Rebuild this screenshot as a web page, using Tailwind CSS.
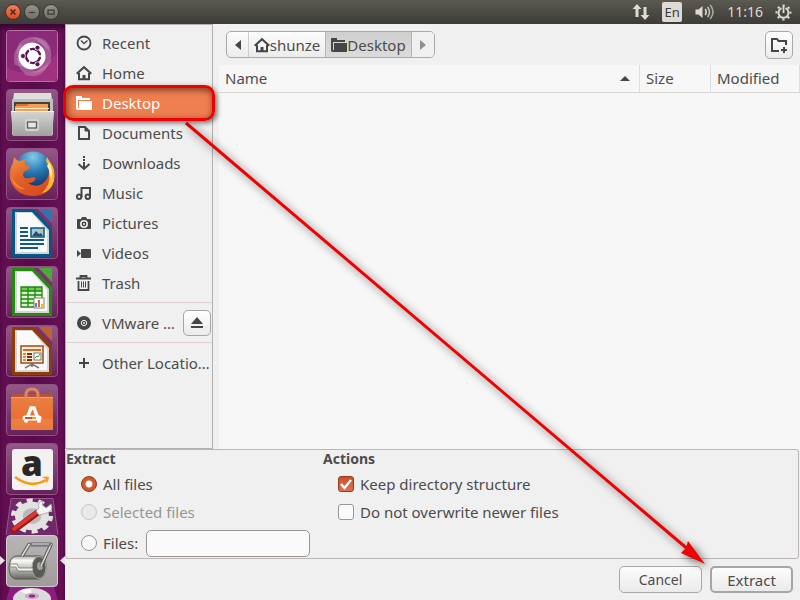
<!DOCTYPE html>
<html lang="en">
<head>
    <meta charset="UTF-8">
    <meta name="viewport" content="width=device-width, initial-scale=1.0">
    <title>Extract</title>
    <script src="https://cdn.jsdelivr.net/npm/@tailwindcss/browser@4"></script>
</head>
<body class="flex h-screen flex-col overflow-hidden bg-[#f0f0f0] font-['Noto_Sans',sans-serif] text-[15px] leading-5 text-[#4c4c4c]">

    <!-- Top panel -->
    <header class="flex h-6 shrink-0 items-center justify-between bg-linear-to-b from-[#5b5950] to-[#3c3b37] text-[#dfdbd2]">
        <div class="flex items-center gap-[3px] pl-[5px]">
            <button aria-label="Close" class="size-4 rounded-full border border-[#3a332e] bg-linear-to-b from-[#f47e57] to-[#dc4a1c]">
                <svg viewBox="0 0 14 14" class="size-full" stroke="#4a2415" stroke-width="1.5"><path d="M4.5 4.5l5 5M9.5 4.5l-5 5"/></svg>
            </button>
            <button aria-label="Minimize" class="size-4 rounded-full border border-[#3a3934] bg-linear-to-b from-[#96948a] to-[#716f66]">
                <svg viewBox="0 0 14 14" class="size-full" stroke="#3c3b37" stroke-width="1.3"><path d="M4 7.5h6"/></svg>
            </button>
            <button aria-label="Maximize" class="size-4 rounded-full border border-[#3a3934] bg-linear-to-b from-[#96948a] to-[#716f66]">
                <svg viewBox="0 0 14 14" class="size-full" fill="none" stroke="#3c3b37" stroke-width="1.3"><path d="M4 5.2h6v4H4z"/></svg>
            </button>
        </div>
        <div class="flex items-center gap-3 pr-2 text-[14px]">
            <svg width="18" height="18" viewBox="0 0 18 18" fill="#dfdbd2"><path d="M5 1l4.500 5H6.500v8h-3V6H.5zM13 17l-4.500-5h3V4h3v8h3z"/></svg>
            <span class="flex size-5 items-center justify-center rounded-xs bg-[#dfdbd2] text-[13px] text-[#3c3b37]">En</span>
            <svg width="21" height="18" viewBox="0 0 20 18" fill="none" stroke="#dfdbd2" stroke-width="1.6" stroke-linecap="round"><path d="M1 6.500h3L8 3v12l-4-3.500H1z" fill="#dfdbd2" stroke="none"/><path d="M11 6.500q1.500 2.500 0 5"/><path d="M13.500 4.500q3 4.500 0 9" stroke="#c5c1b8"/><path d="M16 2.500q5 6.500 0 13" stroke="#aaa79e"/></svg>
            <span>11:16</span>
            <svg width="17" height="17" viewBox="0 0 17 17" fill="none" stroke="#dfdbd2"><circle cx="8.500" cy="8.500" r="7" stroke-width="2" stroke-dasharray="2.200 3.298" stroke-dashoffset="1.100"/><path d="M6.500 4.200A5 5 0 1 0 10.500 4.200" stroke-width="1.900"/><path d="M8.500 2v7" stroke-width="1.800"/></svg>
        </div>
    </header>

    <div class="flex min-h-0 flex-1">

        <!-- Launcher -->
        <nav aria-label="Launcher" class="w-[65px] shrink-0 overflow-hidden bg-linear-to-r from-[#650e54] via-[#560b49] to-[#6a1058] shadow-[inset_0_4px_4px_#3a0630]">
            <div class="flex flex-col items-center gap-[7px] pt-[6px] pr-px">
                <button aria-label="Search" class="size-[52px] overflow-hidden rounded-sm border border-[#b472a4] bg-[#8e2b7c]">
                    <svg viewBox="0 0 50 50" class="size-full">
                        <rect width="50" height="50" fill="#8b2a79"/>
                        <path d="M0 36Q24 52 50 22V50H0z" fill="#a13280"/>
                        <g fill="#c9a0bf" fill-opacity=".4">
                            <path d="M10 25Q8 8 25 6Q42 8 42 20Q34 9 20 12Q12 16 10 25z"/>
                            <path d="M25 6Q47 5 44 31Q36 43 26 42Q40 34 38 20Q34 10 25 6z"/>
                            <path d="M42 32Q35 49 19 44Q8 35 11 24Q17 39 31 40z"/>
                            <path d="M8 34Q4 20 15 12Q12 24 17 36z"/>
                        </g>
                        <circle cx="25" cy="25" r="13.500" fill="#fff"/>
                        <circle cx="26" cy="25" r="7" fill="none" stroke="#5b1350" stroke-width="2.600"/>
                        <path d="M26 25L36 25M26 25L21 16.300M26 25L21 33.700" stroke="#fff" stroke-width="1.500"/>
                        <circle cx="26" cy="25" r="5.700" fill="#fff"/>
                        <g fill="#5b1350" stroke="#fff" stroke-width=".8"><circle cx="16" cy="25" r="2.500"/><circle cx="30.500" cy="16.700" r="2.500"/><circle cx="30.500" cy="33.300" r="2.500"/></g>
                    </svg>
                </button>
                <button aria-label="Files" class="size-[52px] overflow-hidden rounded-sm border border-[#8f5282] bg-linear-to-b from-[#925887] to-[#672159]">
                    <svg viewBox="0 0 50 50" class="size-full">
                        <defs><linearGradient id="cab" x2="0" y2="1"><stop stop-color="#d6d6d5"/><stop offset="1" stop-color="#a0a09e"/></linearGradient></defs>
                        <path d="M7 3h37l2 14H5z" fill="#dededc"/><path d="M5 9h41v36H5z" fill="#bfbfbd"/>
                        <path d="M7 12h36v12H7z" fill="#45413b"/><path d="M9 14h32v8H9z" fill="#d57332"/><path d="M8 16h12l2-2h19v9H8z" fill="#f1a055"/><path d="M8 18h34v1H8z" fill="#ffe3bd"/>
                        <path d="M4 21h43v2l-2 23H6L4 23z" fill="url(#cab)"/>
                        <path d="M4 21.500h43" stroke="#f6f6f5"/>
                        <rect x="18" y="29" width="14" height="12" rx="2" fill="#d3d3d1"/><rect x="20.500" y="32" width="9" height="6" fill="#e7e7e6" stroke="#5a5a59" stroke-width="1.300"/>
                    </svg>
                </button>
                <button aria-label="Firefox" class="size-[52px] overflow-hidden rounded-sm border border-[#8f5282] bg-linear-to-b from-[#925887] to-[#672159]">
                    <svg viewBox="0 0 50 50" class="size-full">
                        <defs><radialGradient id="globe" cx=".5" cy=".15" r=".8"><stop stop-color="#86cbe8"/><stop offset=".5" stop-color="#2b7db9"/><stop offset="1" stop-color="#173a70"/></radialGradient><linearGradient id="fox" x2=".6" y2="1"><stop stop-color="#f29745"/><stop offset=".5" stop-color="#e2602a"/><stop offset="1" stop-color="#d94a20"/></linearGradient></defs>
                        <circle cx="26" cy="20.500" r="18" fill="url(#globe)"/>
                        <path d="M42 12Q49 20 47 32Q43 46 27 47Q8 47 3 30Q2 20 6 14L7 8Q10 12 13 12Q16 10 20 10Q17 13 18 16L23 17Q23 20 18 22Q14 26 18 29Q21 30 26 28Q30 29 28 31Q26 34 21 34Q28 39 35 35Q42 30 42 22z" fill="url(#fox)"/>
                        <path d="M43 13Q49 20 47 32Q44 42 35 44Q44 36 42 24Q43 18 39 12L40 8z" fill="#f5b732"/><path d="M42 13Q47 21 44 33Q44 24 40 17z" fill="#fdee9a"/>
                        <path d="M4 26Q8 37 18 40Q11 41 6 34z" fill="#f3873c"/>
                    </svg>
                </button>
                <button aria-label="Writer" class="size-[52px] overflow-hidden rounded-sm border border-[#8f5282] bg-linear-to-b from-[#925887] to-[#672159]">
                    <svg viewBox="0 0 50 50" class="size-full">
                        <path d="M5 1h22l18 19v29H5z" fill="#075786"/><path d="M8 4h17l17 18v24H8z" fill="#d5d5d5"/><path d="M10 5h15l15 18v21H10z" fill="#fafafa"/>
                        <path d="M32 1h13v14z" fill="#3274ad"/><path d="M27 1h4l14 15v4z" fill="#7b2e6b"/>
                        <g stroke="#125985" stroke-width="2"><path d="M13 20h8M13 24h8M13 28h8M13 32h24M13 36h24M13 40h18"/></g>
                        <rect x="24" y="20" width="13" height="9" fill="#9ecae8" stroke="#0b5583" stroke-width="1.500"/><circle cx="34" cy="22.500" r="1.500" fill="#efbf33"/><path d="M25 28l4-5 3 3 2-1 2 3z" fill="#364c56"/>
                    </svg>
                </button>
                <button aria-label="Calc" class="size-[52px] overflow-hidden rounded-sm border border-[#8f5282] bg-linear-to-b from-[#925887] to-[#672159]">
                    <svg viewBox="0 0 50 50" class="size-full">
                        <path d="M5 1h22l18 19v29H5z" fill="#228b10"/><path d="M8 4h17l17 18v24H8z" fill="#d5d5d5"/><path d="M10 5h15l15 18v21H10z" fill="#fafafa"/>
                        <path d="M32 1h13v14z" fill="#45ae35"/><path d="M27 1h4l14 15v4z" fill="#7b2e6b"/>
                        <path d="M14 20h21v20H14z" fill="#d8f3cd"/><path d="M14 20h21v4H14z" fill="#69cf4e"/><path d="M14 20h21v20H14zM14 24h21M14 28h21M14 32h21M14 36h21M21 20v20M28 20v20" fill="none" stroke="#22850f" stroke-width="1.300"/>
                        <rect x="27" y="31" width="10" height="10" fill="#fff" stroke="#77808a"/><path d="M28 36h2v4h-2z" fill="#318fd4"/><path d="M31 33h2v7h-2z" fill="#df6331"/><path d="M34 37h2v3h-2z" fill="#efba20"/>
                    </svg>
                </button>
                <button aria-label="Impress" class="size-[52px] overflow-hidden rounded-sm border border-[#8f5282] bg-linear-to-b from-[#925887] to-[#672159]">
                    <svg viewBox="0 0 50 50" class="size-full">
                        <path d="M5 1h22l18 19v29H5z" fill="#8e3d0a"/><path d="M8 4h17l17 18v24H8z" fill="#d5d5d5"/><path d="M10 5h15l15 18v21H10z" fill="#fafafa"/>
                        <path d="M32 1h13v14z" fill="#bd6433"/><path d="M27 1h4l14 15v4z" fill="#7b2e6b"/>
                        <path d="M18 42l7-4 7 4M25 37v4" fill="none" stroke="#777" stroke-width="1.500"/>
                        <rect x="14" y="20" width="22" height="17" fill="#fff0df" stroke="#a14a14" stroke-width="1.500"/><path d="M16 24h18" stroke="#d9662a" stroke-width="2"/>
                        <path d="M16 28h3M16 31h3M16 34h3" stroke="#dd8b40" stroke-width="2"/><path d="M20 28h5M20 31h5M20 34h5" stroke="#7d2e0b" stroke-width="2"/><rect x="27" y="27" width="7" height="7" fill="#fff" stroke="#777"/><path d="M28 32l2-2 1 1 2-3" fill="none" stroke="#32a62c"/>
                    </svg>
                </button>
                <button aria-label="Ubuntu Software" class="size-[52px] overflow-hidden rounded-sm border border-[#8f5282] bg-linear-to-b from-[#925887] to-[#672159]">
                    <svg viewBox="0 0 50 50" class="size-full">
                        <defs><linearGradient id="bag" x2="0" y2="1"><stop stop-color="#ea7f44"/><stop offset=".65" stop-color="#e9702f"/><stop offset=".66" stop-color="#ec8144"/><stop offset="1" stop-color="#ea7a3d"/></linearGradient></defs>
                        <path d="M6 9h39l1 5H4z" fill="#b85234"/><path d="M4 12h42v33H4z" fill="url(#bag)"/><path d="M4 12.500h42" stroke="#f3a26a"/>
                        <path d="M19 16V10q0-6 6-6t6 6v6" fill="none" stroke="#df8560" stroke-width="3"/>
                        <path d="M18.500 37.500L24 23h3l5.500 14.500" fill="none" stroke="#fff" stroke-width="3.500"/>
                        <path d="M18 33h14" stroke="#fff" stroke-width="5" stroke-linecap="round"/>
                        <path d="M18 33h7" stroke="#d25823" stroke-width="2"/><path d="M25 33h4" stroke="#f1a51b" stroke-width="2"/>
                    </svg>
                </button>
                <button aria-label="Amazon" class="size-[52px] rounded-sm border border-[#8f5282] bg-linear-to-b from-[#925887] to-[#672159]">
                    <svg viewBox="0 0 50 50" class="size-full overflow-visible">
                        <rect x="5" y="5" width="41" height="41" rx="3" fill="#f3f2f3"/>
                        <text x="25" y="32" text-anchor="middle" font-family="Open Sans, sans-serif" font-weight="800" font-size="35" fill="#292824">a</text>
                        <path d="M8 33Q24 45 39 36" fill="none" stroke="#f79b17" stroke-width="2.600"/><path d="M35 33q4-1 7 0q0 4-3 7q1-3 0-5z" fill="#f79b17"/>
                    </svg>
                </button>
            </div>
            <!-- folded launcher items -->
            <div class="flex flex-col items-center pt-[3px] pr-px">
                <button aria-label="System Settings" class="h-[37px] w-[54px]">
                    <svg viewBox="0 0 54 37" class="size-full">
                        <path d="M6 .5h42l5 37H1z" fill="#70286a" stroke="#96568a"/>
                        <g transform="translate(27 18) scale(1 .84)" fill="none"><circle r="18.500" stroke="#e2e2e1" stroke-width="5" stroke-dasharray="6 5.624"/><circle r="13" stroke="#e2e2e1" stroke-width="8"/><circle r="9" fill="#bdb8bc" stroke="#c9c9c9"/></g>
                        <path d="M9 32L32 15" stroke="#a01616" stroke-width="6.500" stroke-linecap="round"/><path d="M9 31L32 14" stroke="#d63a32" stroke-width="3.500" stroke-linecap="round"/>
                        <path d="M31 13L34 10Q32 4 38 3L37 7L41 10L46 6Q49 12 42 15L34 17z" fill="#f4f4f3" stroke="#999" stroke-width=".7"/>
                    </svg>
                </button>
                <div class="relative flex w-[65px] justify-center">
                    <svg class="absolute top-[21px] left-0" width="5" height="9" viewBox="0 0 5 9" fill="#e9dfe7"><path d="M0 0l5 4.500L0 9z"/></svg>
                    <button aria-label="Archive Manager" class="size-[52px] overflow-hidden rounded-sm border border-[#d2ced0] bg-linear-to-b from-[#b9b5b7] to-[#a19a9e]">
                        <svg viewBox="0 0 50 50" class="size-full">
                            <defs><linearGradient id="drum" x2="0" y2="1"><stop stop-color="#a9a9a5"/><stop offset=".2" stop-color="#fbfbf9"/><stop offset=".5" stop-color="#c6c6c1"/><stop offset="1" stop-color="#686863"/></linearGradient></defs>
                            <path d="M9 20h24q6 1 6 11t-7 12H8Q2 41 2 31Q3 21 9 20z" fill="url(#drum)" stroke="#555550"/>
                            <ellipse cx="32" cy="31.500" rx="7" ry="11" fill="#5b5b56" stroke="#a7a7a2"/><ellipse cx="33" cy="30" rx="3" ry="4" fill="#a2a29d"/>
                            <path d="M3 28h7l2 4h14v3H11l-2-4H3z" fill="#f2f2ee" stroke="#686862" stroke-width=".7"/>
                            <path d="M15 20L22 8.500H44L34 30" fill="none" stroke="#5c5c59" stroke-width="3.500" stroke-linejoin="round"/><path d="M15 20L22 8.500H44L34 30" fill="none" stroke="#d9d9d5" stroke-width="1.600" stroke-linejoin="round"/><path d="M25 8.500h17" stroke="#77777a" stroke-width="4" stroke-linecap="round"/><path d="M25 8h17" stroke="#bcbcba" stroke-width="1.500"/>
                        </svg>
                    </button>
                    <svg class="absolute top-[21px] right-0" width="5" height="9" viewBox="0 0 5 9" fill="#e9dfe7"><path d="M5 0L0 4.500 5 9z"/></svg>
                </div>
                <button aria-label="Disc" class="h-[14px] w-[54px]">
                    <svg viewBox="0 0 54 14" class="size-full">
                        <path d="M5 0h44l4 14H1z" fill="#8e1c7e"/><ellipse cx="27" cy="12" rx="19" ry="11" fill="#dddadd"/><path d="M27 9L14 4q6-3 12-2z" fill="#f8fae9"/><ellipse cx="27" cy="9" rx="7" ry="3" fill="#c9a2c6"/><ellipse cx="27" cy="9" rx="3" ry="1.500" fill="#8d267c"/>
                    </svg>
                </button>
            </div>
        </nav>

        <!-- Extract dialog -->
        <main class="relative flex min-w-0 flex-1 flex-col">
            <div class="flex min-h-0 flex-1">

                <!-- Places -->
                <aside class="w-[148px] shrink-0 border border-[#b5b0ae] pt-[3px]">
                    <ul>
                        <li><a href="#" class="flex h-[30px] items-center gap-[10px] pl-[10px]">
                            <svg width="16" height="16" viewBox="0 0 16 16" fill="none" stroke="#464646"><circle cx="8" cy="8" r="6.500" stroke-width="1.800"/><path d="M5 5.500l3 3 3.500-3" stroke-width="1.300"/></svg>Recent</a></li>
                        <li><a href="#" class="flex h-[30px] items-center gap-[10px] pl-[10px]">
                            <svg width="16" height="16" viewBox="0 0 16 16" fill="none" stroke="#464646" stroke-width="2"><path d="M.7 8.700L8 2.200l7.300 6.500M3 8v6.200h10V8"/><path d="M6.500 10h3v4h-3z" fill="#464646" stroke="none"/></svg>Home</a></li>
                        <li class="relative"><a href="#" class="flex h-[30px] items-center gap-[10px] bg-[#f07f50] pl-[10px] text-white">
                            <svg width="16" height="16" viewBox="0 0 16 16" fill="#fff"><path d="M0 1h6v2h8v2H2v8l-2 2z"/><path d="M3 6h13v9H1z"/><path d="M2.500 13V5.500H14" fill="none" stroke="#f07f50"/></svg>Desktop</a>
                            <span class="pointer-events-none absolute -inset-x-[3px] -inset-y-[3px] z-10 rounded-[10px] border-3 border-[#f00000] shadow-[2px_2px_5px_#00000088,inset_1px_2px_7px_#00000088]"></span></li>
                        <li><a href="#" class="flex h-[30px] items-center gap-[10px] pl-[10px]">
                            <svg width="16" height="16" viewBox="0 0 16 16" fill="none" stroke="#464646" stroke-width="2"><path d="M3 2h6l4 4v8H3z"/><path d="M9 2v4h4z" fill="#464646" stroke-width="1"/></svg>Documents</a></li>
                        <li><a href="#" class="flex h-[30px] items-center gap-[10px] pl-[10px]">
                            <svg width="16" height="16" viewBox="0 0 16 16" fill="none" stroke="#464646" stroke-width="2"><path d="M8 1v6" stroke-dasharray="2 1"/><path d="M8 7v6M2.500 9L8 14l5.500-5"/></svg>Downloads</a></li>
                        <li><a href="#" class="flex h-[30px] items-center gap-[10px] pl-[10px]">
                            <svg width="16" height="16" viewBox="0 0 16 16" fill="none" stroke="#464646" stroke-width="2"><circle cx="3.200" cy="11.800" r="2.200"/><circle cx="11.800" cy="11.800" r="2.200"/><path d="M5.500 12V3H14v9"/></svg>Music</a></li>
                        <li><a href="#" class="flex h-[30px] items-center gap-[10px] pl-[10px]">
                            <svg width="16" height="16" viewBox="0 0 16 16" fill="#464646"><path d="M2 4h3l1-2h4l1 2h3q1 0 1 1v8q0 1-1 1H2q-1 0-1-1V5q0-1 1-1z"/><circle cx="8" cy="9" r="3.200" fill="#464646" stroke="#f0f0f0" stroke-width="1.600"/><circle cx="8" cy="9" r="1" fill="#f0f0f0"/></svg>Pictures</a></li>
                        <li><a href="#" class="flex h-[30px] items-center gap-[10px] pl-[10px]">
                            <svg width="16" height="16" viewBox="0 0 16 16" fill="#464646"><path d="M1 5l4 3.500L1 12z"/><path d="M6 4h8q1 0 1 1v7q0 1-1 1H6q-1 0-1-1V5q0-1 1-1z"/></svg>Videos</a></li>
                        <li><a href="#" class="flex h-[30px] items-center gap-[10px] pl-[10px]">
                            <svg width="16" height="16" viewBox="0 0 16 16" fill="none" stroke="#464646" stroke-width="1.800"><path d="M0 3.500h15M4.500 3V1h6v2M2.500 6v9h10V6" /><path d="M5.500 6.500v6M7.500 6.500v6M9.500 6.500v6" stroke-width="1"/></svg>Trash</a></li>
                    </ul>
                    <div class="mt-1 flex h-[41px] items-center gap-[10px] border-y border-[#dcd2d2] pl-[10px]">
                        <svg width="16" height="16" viewBox="0 0 16 16"><circle cx="8" cy="8" r="7" fill="#464646"/><circle cx="8" cy="8" r="2.700" fill="none" stroke="#f0f0f0"/><circle cx="8" cy="8" r="1" fill="#f0f0f0"/></svg>
                        <a href="#" class="w-20 whitespace-nowrap">VMware …</a>
                        <button aria-label="Eject" class="-ml-[9px] flex h-[26px] w-[28px] shrink-0 items-center justify-center rounded-[5px] border border-[#a8a5a3] bg-linear-to-b from-white to-[#ebebeb]">
                            <svg width="14" height="14" viewBox="0 0 14 14" fill="#464646"><path d="M7 1l6 7H1zM1 10h12v2H1z"/></svg>
                        </button>
                    </div>
                    <a href="#" class="mt-[5px] flex h-[30px] items-center gap-[10px] pl-[10px] whitespace-nowrap">
                        <svg width="16" height="16" viewBox="0 0 16 16" stroke="#464646" stroke-width="2" class="shrink-0"><path d="M8 3v10M3 8h10"/></svg>Other Locatio…</a>
                </aside>

                <div class="flex min-w-0 flex-1 flex-col pl-[6px]">
                    <!-- Path bar -->
                    <div class="flex h-[41px] items-center justify-between px-[7px]">
                        <div class="flex h-[27px] overflow-hidden rounded-[5px] border border-[#aaa7a5] bg-linear-to-b from-[#fcfcfc] to-[#ececec]">
                            <button aria-label="Back" class="flex w-[22px] items-center justify-center border-r border-[#d0cdcb]"><svg width="6" height="10" viewBox="0 0 6 10" fill="#464646"><path d="M6 0v10L0 5z"/></svg></button>
                            <button class="flex w-[77px] items-center justify-center border-r border-[#b8b5b3]"><svg width="16" height="16" viewBox="0 0 16 16" fill="none" stroke="#464646" stroke-width="2"><path d="M.7 8.700L8 2.200l7.300 6.500M3 8v6.200h10V8"/><path d="M6.500 10h3v4h-3z" fill="#464646" stroke="none"/></svg>shunze</button>
                            <button class="flex w-[86px] items-center justify-center border-r border-[#b8b5b3] bg-linear-to-b from-[#cfcfcf] to-[#dcdcdc]"><svg width="16" height="16" viewBox="0 0 16 16" fill="#464646"><path d="M0 1h6v2h8v2H2v8l-2 2z"/><path d="M3 6h13v9H1z"/><path d="M2.500 13V5.500H14" fill="none" stroke="#d4d4d4"/></svg>Desktop</button>
                            <button aria-label="Forward" class="flex w-[22px] items-center justify-center bg-[#f0f0f0]"><svg width="6" height="10" viewBox="0 0 6 10" fill="#909090"><path d="M0 0v10l6-5z"/></svg></button>
                        </div>
                        <button aria-label="Create Folder" class="flex size-[28px] items-center justify-center rounded-[5px] border border-[#aaa7a5] bg-linear-to-b from-white to-[#ebebeb]">
                            <svg width="18" height="16" viewBox="0 0 18 16" fill="none" stroke="#464646" stroke-width="2"><path d="M9 14H2V2h5l1.500 2H16v4"/><path d="M14 10v6M11 13h6"/></svg>
                        </button>
                    </div>
                    <!-- File list -->
                    <div class="flex-1 bg-[#f7f7f7]">
                        <table class="w-full table-fixed border-collapse text-left">
                            <thead>
                                <tr class="h-[27px] border-b border-[#dad7d0]">
                                    <th class="border-r border-[#dedede] px-[6px] font-normal"><span class="flex items-center justify-between pr-[3px]">Name<svg width="10" height="5" viewBox="0 0 10 5" fill="#464646"><path d="M0 5l5-5 5 5z"/></svg></span></th>
                                    <th class="w-[71px] border-r border-[#dedede] px-[6px] font-normal">Size</th>
                                    <th class="w-[89px] border-r border-[#dedede] px-[6px] font-normal">Modified</th>
                                </tr>
                            </thead>
                        </table>
                    </div>
                </div>
            </div>

            <!-- Options -->
            <form id="options" class="mr-px flex h-[110px] shrink-0 rounded-[3px] border border-[#bcb6b4]">
                <fieldset class="w-[257px]">
                    <legend class="h-5 text-[14px] leading-[18px] font-bold">Extract</legend>
                    <label class="flex h-7 items-center gap-[6px] pl-[15px]"><input type="radio" name="files" checked class="size-4 appearance-none rounded-full border border-[#933b1d] bg-[#d5623a] bg-[radial-gradient(circle,#fff_0_3px,#cf5a32_4px)]">All files</label>
                    <label class="flex h-7 items-center gap-[6px] pl-[15px] text-[#999590]"><input type="radio" name="files" disabled class="size-4 appearance-none rounded-full border border-[#c8c5c2] bg-[#e9e9e9]">Selected files</label>
                    <div class="flex h-[34px] items-center pl-[15px]">
                        <label class="flex w-[65px] items-center gap-[6px]"><input type="radio" name="files" class="size-4 appearance-none rounded-full border border-[#999694] bg-[#fafafa]">Files:</label>
                        <input type="text" aria-label="File pattern" class="h-[27px] w-[164px] rounded-[5px] border border-[#999694] bg-[#fafafa] px-2">
                    </div>
                </fieldset>
                <fieldset>
                    <legend class="h-5 text-[14px] leading-[18px] font-bold">Actions</legend>
                    <label class="flex h-7 items-center gap-[6px] pl-[15px]">
                        <span class="relative flex size-4"><input type="checkbox" checked class="size-4 appearance-none rounded-[3px] border border-[#933b1d] bg-linear-to-b from-[#c95028] to-[#dc7450]"><svg class="pointer-events-none absolute inset-0 size-4" viewBox="0 0 16 16" fill="none" stroke="#fff" stroke-width="2.400"><path d="M3 8l3.500 4L13 4"/></svg></span>Keep directory structure</label>
                    <label class="flex h-7 items-center gap-[6px] pl-[15px]"><input type="checkbox" class="size-4 appearance-none rounded-[3px] border border-[#999694] bg-[#fafafa]">Do not overwrite newer files</label>
                </fieldset>
            </form>

            <footer class="flex h-[41px] shrink-0 items-center justify-end gap-2 pr-[7px]">
                <button class="h-[27px] w-[83px] rounded-[5px] border border-[#aaa7a5] bg-linear-to-b from-[#fcfcfc] to-[#ebebeb] text-[14px]">Cancel</button>
                <button form="options" class="h-[27px] w-[83px] rounded-[5px] border-2 border-[#a8a5a3] bg-linear-to-b from-[#fcfcfc] to-[#ebebeb] text-[15px] leading-5">Extract</button>
            </footer>

            <!-- Arrow from Desktop to the Extract button -->
            <svg class="pointer-events-none absolute inset-0 size-full drop-shadow-[3px_3px_4px_#00000099]" viewBox="0 0 735 576" preserveAspectRatio="none" fill="#f00000">
                <path d="M121 99L625 527" stroke="#f00000" stroke-width="3"/>
                <path d="M640 540L616 529L621 524L623 517z"/>
            </svg>
        </main>
    </div>
</body>
</html>
